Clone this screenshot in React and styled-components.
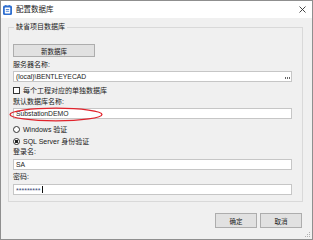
import styled, { createGlobalStyle } from 'styled-components';

const GlobalStyle = createGlobalStyle`
  html, body {
    margin: 0;
    padding: 0;
    background: #ffffff;
  }
  body {
    font-family: "Noto Sans CJK SC", "Liberation Sans", sans-serif;
  }
`;

const FONT = `"Liberation Sans", "Noto Sans CJK SC", sans-serif`;

export default function App() {
  return (
    <>
      <GlobalStyle />
      <Window>
        <TitleBar>
          <TitleIcon viewBox="0 0 9 10">
            <rect x="0" y="0.5" width="9" height="9.5" rx="1.5" fill="#2f6fd0" />
            <rect x="1.8" y="2.6" width="5.4" height="5.8" rx="0.6" fill="#ffffff" />
            <rect x="2.2" y="0" width="1.2" height="2" fill="#2f6fd0" />
            <rect x="5.6" y="0" width="1.2" height="2" fill="#2f6fd0" />
            <rect x="2.8" y="4" width="3.4" height="0.8" fill="#2f6fd0" />
            <rect x="2.8" y="5.8" width="3.4" height="0.8" fill="#2f6fd0" />
          </TitleIcon>
          <TitleText>配置数据库</TitleText>
          <CloseIcon viewBox="0 0 7 7">
            <path d="M0.5 0.5 L6.5 6.5 M6.5 0.5 L0.5 6.5" stroke="#333" strokeWidth="0.9" />
          </CloseIcon>
        </TitleBar>
        <Body>
          <Group>
            <Legend>缺省项目数据库</Legend>
            <PushButton>新数据库</PushButton>
            <Label $top={4}>服务器名称:</Label>
            <TextField $top={2}>
              (local)\BENTLEYECAD
              <Ellipsis>
                <Dot />
                <Dot />
                <Dot />
              </Ellipsis>
            </TextField>
            <CheckRow>
              <Box />
              <span>每个工程对应的单独数据库</span>
            </CheckRow>
            <Label $top={4}>默认数据库名称:</Label>
            <TextField $top={2}>SubstationDEMO</TextField>
            <RadioRow $top={6}>
              <Radio />
              <span>Windows 验证</span>
            </RadioRow>
            <RadioRow $top={4}>
              <Radio $checked />
              <span>SQL Server 身份验证</span>
            </RadioRow>
            <Label $top={3}>登录名:</Label>
            <TextField $top={3}>SA</TextField>
            <Label $top={3}>密码:</Label>
            <TextField $top={3}>
              <Secret>*********</Secret>
              <Caret />
            </TextField>
          </Group>
          <Footer>
            <DialogButton>确定</DialogButton>
            <DialogButton>取消</DialogButton>
          </Footer>
        </Body>
        <RedEllipse viewBox="0 0 94 15">
          <ellipse cx="47" cy="7.5" rx="46" ry="6.3" fill="none" stroke="#e0232c" strokeWidth="1.3" />
        </RedEllipse>
        <SizeGrip viewBox="0 0 6 6">
          <rect x="4" y="0" width="1" height="1" fill="#b0b0b0" />
          <rect x="2" y="2" width="1" height="1" fill="#b0b0b0" />
          <rect x="4" y="2" width="1" height="1" fill="#b0b0b0" />
          <rect x="0" y="4" width="1" height="1" fill="#b0b0b0" />
          <rect x="2" y="4" width="1" height="1" fill="#b0b0b0" />
          <rect x="4" y="4" width="1" height="1" fill="#b0b0b0" />
        </SizeGrip>
      </Window>
    </>
  );
}

const Window = styled.div`
  position: relative;
  box-sizing: border-box;
  width: 313px;
  height: 240px;
  border: 1px solid #8f8f8f;
  background: #f0f0f0;
  display: flex;
  flex-direction: column;
  font-family: ${FONT};
  font-size: 7px;
  color: #1a1a1a;
  overflow: hidden;
`;

const TitleBar = styled.div`
  height: 17px;
  background: #ffffff;
  display: flex;
  align-items: center;
  padding: 0 6px 0 2px;
`;

const TitleIcon = styled.svg`
  width: 9px;
  height: 10px;
  flex: none;
`;

const TitleText = styled.span`
  margin-left: 4px;
  font-size: 7.5px;
  line-height: 9px;
  flex: 1;
`;

const CloseIcon = styled.svg`
  width: 7px;
  height: 7px;
`;

const Body = styled.div`
  flex: 1;
  display: flex;
  flex-direction: column;
  padding: 0 9px 0 7px;
`;

const Group = styled.fieldset`
  margin: 5px 0 0 0;
  padding: 0 10px 6px 4px;
  border: 1px solid #d9d9d9;
  display: flex;
  flex-direction: column;
  min-width: 0;
`;

const Legend = styled.legend`
  padding: 0 2px;
  margin-left: 1px;
  line-height: 8px;
  font-size: 7px;
`;

const PushButton = styled.div`
  box-sizing: border-box;
  margin-top: 13px;
  width: 82px;
  height: 13px;
  background: #e1e1e1;
  border: 1px solid #adadad;
  display: flex;
  align-items: center;
  justify-content: center;
  font-size: 6.5px;
`;

const Label = styled.div`
  margin-top: ${(p) => p.$top}px;
  line-height: 8px;
  height: 8px;
`;

const TextField = styled.div`
  position: relative;
  box-sizing: border-box;
  margin-top: ${(p) => p.$top}px;
  height: 11px;
  background: #ffffff;
  border: 1px solid #c6c6c6;
  display: flex;
  align-items: center;
  padding-left: 2px;
  font-size: 6.8px;
`;

const Ellipsis = styled.span`
  margin-left: auto;
  margin-right: 1px;
  margin-top: 3px;
  display: flex;
  gap: 1px;
`;

const Dot = styled.span`
  width: 1px;
  height: 2px;
  background: #666;
`;

const Secret = styled.span`
  color: #3a4a78;
  font-size: 7px;
  line-height: 6px;
  padding-top: 2px;
`;

const Caret = styled.span`
  width: 1px;
  height: 7px;
  margin-left: 1px;
  background: #111;
`;

const CheckRow = styled.div`
  margin-top: 4px;
  height: 8px;
  display: flex;
  align-items: center;
  gap: 3px;
`;

const Box = styled.span`
  box-sizing: border-box;
  width: 7px;
  height: 7px;
  border: 1px solid #333;
  background: #ffffff;
`;

const RadioRow = styled.div`
  margin-top: ${(p) => p.$top}px;
  height: 8px;
  display: flex;
  align-items: center;
  gap: 3px;
`;

const Radio = styled.span`
  box-sizing: border-box;
  width: 7px;
  height: 7px;
  border-radius: 50%;
  border: 1px solid #333;
  background: ${(p) => (p.$checked ? 'radial-gradient(circle, #222 0 1.6px, #fff 1.9px)' : '#ffffff')};
`;

const Footer = styled.div`
  display: flex;
  justify-content: flex-end;
  gap: 3px;
  margin-top: 11px;
  padding-right: 1px;
`;

const DialogButton = styled.div`
  box-sizing: border-box;
  width: 42px;
  height: 15px;
  background: #e1e1e1;
  border: 1px solid #adadad;
  display: flex;
  align-items: center;
  justify-content: center;
  font-size: 6.5px;
`;

const RedEllipse = styled.svg`
  position: absolute;
  left: 8px;
  top: 106px;
  width: 94px;
  height: 15px;
  pointer-events: none;
`;

const SizeGrip = styled.svg`
  position: absolute;
  right: 1px;
  bottom: 1px;
  width: 6px;
  height: 6px;
`;
